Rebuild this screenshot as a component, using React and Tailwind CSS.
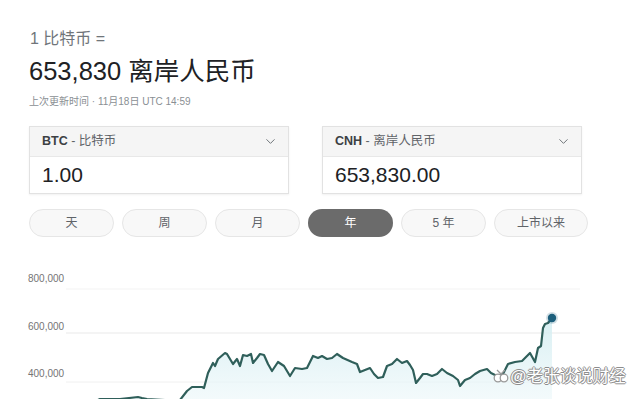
import { ChevronDown } from 'lucide-react';

const font = { fontFamily: '"Liberation Sans", "Noto Sans CJK SC", sans-serif' };

const ranges = ['天', '周', '月', '年', '5 年', '上市以来'];

const pts = [
  [92, 402], [100, 398], [120, 398], [138, 396], [142, 397], [147, 398], [165, 399], [180, 399],
  [187, 390], [192, 386], [202, 386], [204, 387], [208, 372], [213, 362], [215, 365], [218, 358],
  [225, 352], [227, 353], [233, 363], [237, 358], [240, 365], [243, 354], [247, 355], [251, 353],
  [253, 362], [257, 357], [260, 353], [264, 354], [268, 363], [272, 370], [278, 361], [284, 365],
  [290, 375], [295, 367], [302, 368], [307, 367], [313, 355], [318, 357], [322, 355], [327, 358],
  [332, 357], [337, 353], [343, 357], [352, 361], [357, 363], [360, 371], [365, 369], [370, 367],
  [374, 373], [378, 377], [383, 376], [387, 365], [392, 363], [397, 358], [402, 362], [407, 360],
  [410, 364], [413, 369], [416, 382], [420, 377], [423, 373], [427, 373], [432, 375], [437, 373],
  [442, 368], [447, 372], [453, 375], [458, 379], [460, 385], [465, 379], [470, 377], [475, 373],
  [480, 370], [487, 368], [491, 372], [497, 375], [503, 373], [508, 363], [515, 361], [522, 360],
  [527, 355], [530, 352], [535, 361], [538, 347], [541, 345], [543, 327], [545, 323], [548, 322],
  [552, 317],
];

const line = pts.map(([x, y]) => `${x},${y - 255}`).join(' ');
const area = `${line} 552,150 92,150`;

function ConverterBox({ code, name, value }) {
  return (
    <div className="w-[260px] border border-[#e2e2e2] bg-white shadow-[0_1px_2px_rgba(0,0,0,0.06)]">
      <div className="flex h-[30px] items-center justify-between border-b border-[#e8e8e8] bg-[#f5f5f5] pl-[12px] pr-[10px]">
        <span className="text-[12.5px] text-[#5f6368]">
          <span className="font-bold text-[#3c4043]">{code}</span> - {name}
        </span>
        <ChevronDown className="h-[15px] w-[15px] text-[#70757a]" strokeWidth={1.6} />
      </div>
      <div className="flex h-[36px] items-center pl-[12px] text-[21px] text-[#202124]">{value}</div>
    </div>
  );
}

export default function App() {
  return (
    <div className="relative h-[399px] w-[640px] overflow-hidden bg-white" style={font}>
      <div className="px-[29px] pt-[29px]">
        <p className="pl-px text-[16px] leading-[20px] text-[#70757a]">1 比特币 =</p>
        <p className="mt-[6px] text-[25.5px] leading-[32px] text-[#202124]">653,830 离岸人民币</p>
        <p className="mt-[8px] text-[10px] leading-[14px] text-[#8a8f94]">上次更新时间 · 11月18日 UTC 14:59</p>

        <div className="mt-[17px] flex gap-[33px]">
          <ConverterBox code="BTC" name="比特币" value="1.00" />
          <ConverterBox code="CNH" name="离岸人民币" value="653,830.00" />
        </div>

        <div className="mt-[15px] flex gap-[8px]">
          {ranges.map((r, i) => (
            <div
              key={r}
              className={
                (i === 5 ? 'w-[94px] ' : 'w-[85px] ') +
                (r === '年'
                  ? 'flex h-[28px] items-center justify-center rounded-full bg-[#6b6b6b] text-[12px] text-white'
                  : 'flex h-[28px] items-center justify-center rounded-full border border-[#e6e6e6] bg-[#f8f8f8] text-[12px] text-[#5f6368]')
              }
            >
              {r}
            </div>
          ))}
        </div>
      </div>

      <div className="relative mt-[19px] h-[144px] w-[640px]">
        <svg width="640" height="144" className="block">
          <defs>
            <linearGradient id="fill" x1="0" y1="0" x2="0" y2="1">
              <stop offset="0" stopColor="#d3edf1" stopOpacity="0.9" />
              <stop offset="1" stopColor="#eef8fa" stopOpacity="0.6" />
            </linearGradient>
          </defs>
          <line x1="66" y1="33" x2="580" y2="33" stroke="#f3f3f3" />
          <line x1="66" y1="77" x2="580" y2="77" stroke="#e9e9e9" />
          <line x1="66" y1="126" x2="580" y2="126" stroke="#f0f0f0" />
          <text x="28" y="26" fontSize="10" fill="#757575">800,000</text>
          <text x="28" y="74" fontSize="10" fill="#757575">600,000</text>
          <text x="28" y="121" fontSize="10" fill="#757575">400,000</text>
          <polygon points={area} fill="url(#fill)" />
          <polyline points={line} fill="none" stroke="#2f5f5a" strokeWidth="2.2" strokeLinejoin="round" strokeLinecap="round" />
          <circle cx="552" cy="62" r="6" fill="#1d5f7c" fillOpacity="0.2" />
          <circle cx="552" cy="62" r="4.2" fill="#1d5f7c" />
        </svg>

        <div className="absolute left-[493px] top-[111px] flex items-center gap-[1px]">
          <svg width="16" height="14" viewBox="0 0 16 14">
            <g fill="white" stroke="#9a9a9a" strokeWidth="1.3">
              <circle cx="5" cy="9" r="3.8" />
              <circle cx="11" cy="9" r="3.8" />
              <path d="M4 1 L8 5 L12 1" fill="none" />
            </g>
          </svg>
          <span
            className="text-[16.5px] leading-[18px] text-white"
            style={{ textShadow: '1px 0 #8d8d8d, -1px 0 #8d8d8d, 0 1px #8d8d8d, 0 -1px #8d8d8d' }}
          >
            @老张谈说财经
          </span>
        </div>
      </div>
    </div>
  );
}
